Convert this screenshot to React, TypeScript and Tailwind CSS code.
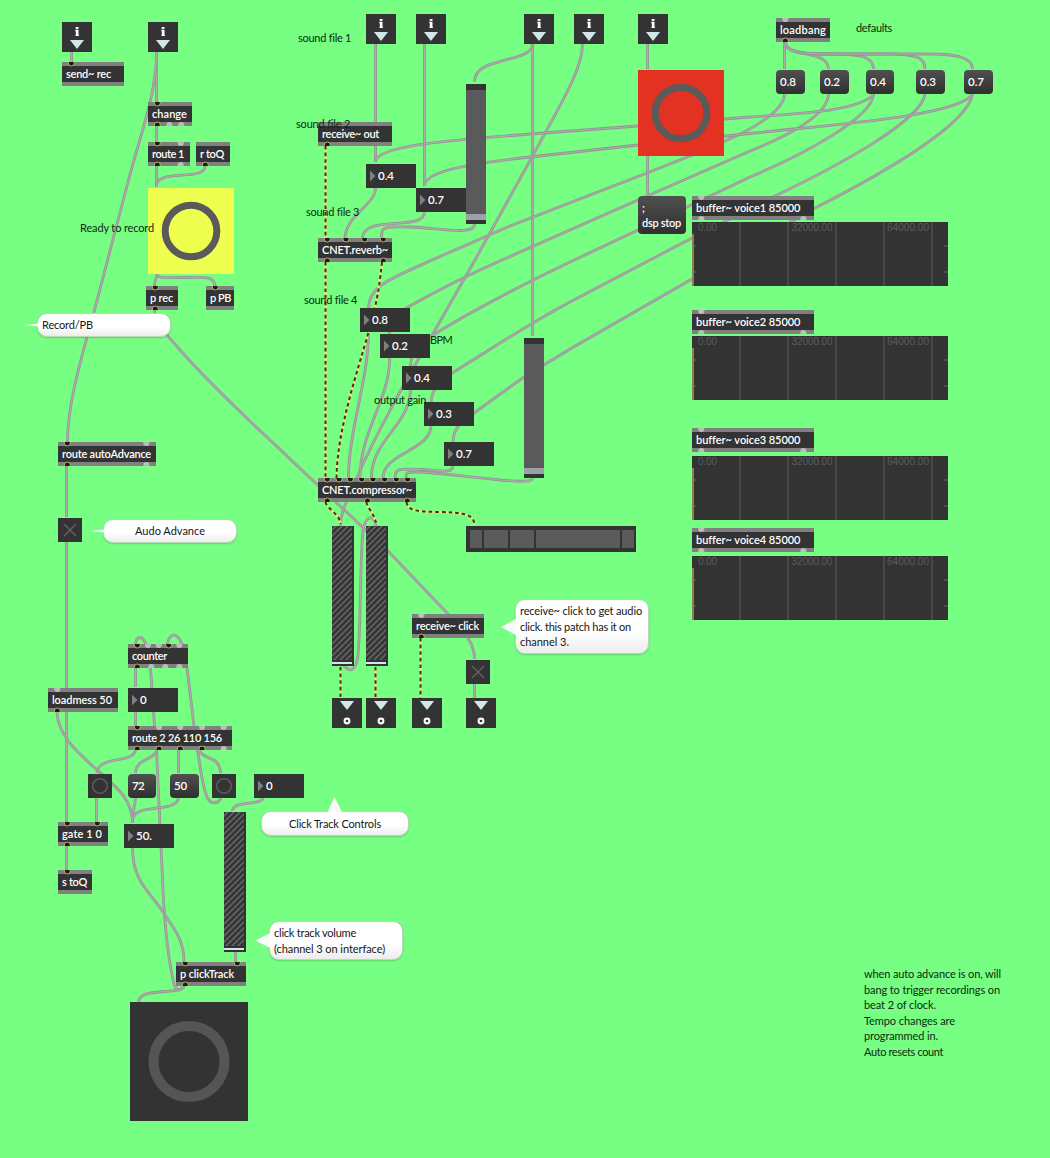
import { useLayoutEffect, useRef, useState } from "react";
import type { ReactNode } from "react";

/* Text whose tracking is tuned so that it spans the given width. */
function Fit({ w, children }: { w: number; children: string }) {
  const ref = useRef<HTMLSpanElement>(null);
  const [tracking, setTracking] = useState(0);
  useLayoutEffect(() => {
    if (ref.current) {
      const natural = ref.current.getBoundingClientRect().width;
      setTracking((w - natural) / children.length);
    }
  }, [w, children]);
  return (
    <span ref={ref} className="inline-block whitespace-pre" style={{ letterSpacing: tracking }}>
      {children}
    </span>
  );
}

/* A node on the free patching canvas. */
function At({ x, y, w, h, className = "", children }: { x: number; y: number; w?: number; h?: number; className?: string; children?: ReactNode }) {
  return (
    <div className={`absolute ${className}`} style={{ left: x, top: y, width: w, height: h }}>
      {children}
    </div>
  );
}

type Port = [number, boolean];

function Inlet({ p, flip, h }: { p: Port; flip?: boolean; h: number }) {
  const [cx, on] = p;
  const d = flip ? `M${cx - 3} ${h} V${h - 1} A3 3 0 0 1 ${cx + 3} ${h - 1} V${h}` : `M${cx - 3} 0 V1 A3 3 0 0 0 ${cx + 3} 1 V0`;
  return <path d={d} fill={on ? "#1d1d14" : "#bdbdbd"} stroke={on ? "#c3b878" : "none"} strokeWidth="0.9" />;
}

/* [x, y, width, label, label width, inlets, outlets] */
type Obj = [number, number, number, string, number, Port[], Port[]];
const a: Port = [9.3, true];
const b: Port = [9.3, false];

const objects: Obj[] = [
  [62, 62, 62, "send~ rec", 45, [a], []],
  [148, 102, 44, "change", 35, [a], [a, [21.3, false], [33.3, false]]],
  [148, 142, 42, "route 1", 32, [a, [32.7, false]], [a, [32.7, false]]],
  [196, 142, 34, "r toQ", 24, [], [a]],
  [146, 286, 32, "p rec", 23, [a], [a]],
  [206, 286, 28, "p PB", 21, [a], []],
  [318, 122, 74, "receive~ out", 57, [], [a]],
  [318, 238, 74, "CNET.reverb~", 66, [a, [28, true], [46.7, true], [65.3, true]], [a, [65.3, true]]],
  [318, 478, 98, "CNET.compressor~", 90, [a, [21, true], [32.3, true], [43.7, true], [55, true], [66.7, true], [78.3, true], [89.7, true]], [a, [49.5, true], [89.3, true]]],
  [776, 18, 54, "loadbang", 46, [b], [a]],
  [692, 196, 122, "buffer~ voice1 85000", 104, [b], [b, [111.3, false]]],
  [692, 310, 122, "buffer~ voice2 85000", 104, [b], [b, [111.3, false]]],
  [692, 428, 122, "buffer~ voice3 85000", 104, [b], [b, [111.3, false]]],
  [692, 528, 122, "buffer~ voice4 85000", 104, [b], [b, [111.3, false]]],
  [58, 442, 98, "route autoAdvance", 89, [a, [88.3, false]], [a, [88.3, false]]],
  [128, 644, 60, "counter", 35, [a, [20, false], [30.7, false], [40.7, true], [51.3, false]], [a, [23.3, false], [37.3, false], [51.3, false]]],
  [48, 688, 70, "loadmess 50", 60, [b], [a]],
  [128, 726, 104, "route 2 26 110 156", 90, [a, [31, false], [52.3, false], [74, false], [95.7, false]], [a, [31, true], [52.3, true], [74, true], [95.7, false]]],
  [58, 822, 50, "gate 1 0", 40, [a, [39.3, true]], [a]],
  [58, 870, 34, "s toQ", 25, [a], []],
  [176, 962, 70, "p clickTrack", 54, [a, [61.3, true]], [a]],
  [412, 614, 72, "receive~ click", 63, [b], [a]],
];

const numbers: [number, number, string, number][] = [
  [366, 164, "0.4", 16],
  [416, 188, "0.7", 16],
  [360, 308, "0.8", 16],
  [380, 334, "0.2", 16],
  [402, 366, "0.4", 16],
  [424, 402, "0.3", 16],
  [444, 442, "0.7", 16],
  [128, 688, "0", 7],
  [254, 774, "0", 7],
  [124, 824, "50.", 16],
];

const messages: [number, number, number, string, number][] = [
  [776, 70, 29, "0.8", 16],
  [820, 70, 29, "0.2", 16],
  [866, 70, 28, "0.4", 16],
  [916, 70, 29, "0.3", 16],
  [964, 70, 29, "0.7", 16],
  [128, 774, 28, "72", 12],
  [170, 774, 29, "50", 13],
];

const comments: [number, number, string, number][] = [
  [298, 30, "sound file 1", 53],
  [296, 116, "sound file 2", 54],
  [306, 204, "sound file 3", 53],
  [304, 292, "sound file 4", 53],
  [80, 220, "Ready to record", 74],
  [430, 332, "BPM", 22],
  [374, 392, "output gain", 52],
  [856, 20, "defaults", 36],
];

const notes: [string, number][] = [
  ["when auto advance is on, will", 137],
  ["bang to trigger recordings on", 136],
  ["beat 2 of clock.", 72],
  ["Tempo changes are", 91],
  ["programmed in.", 74],
  ["Auto resets count", 79],
];

const cords = [
  "M71.5 52V62",
  "M156.5 52V102",
  "M156.5 52C156.5 95 140 135 128 182L94 312C84 350 67.5 400 67.5 442",
  "M156.5 126V142",
  "M156.5 166V187",
  "M205 166C205 182 157 168 156.5 186",
  "M157 274C157 280 154.5 278 154.5 286",
  "M157 274C158 279 168 277.5 185 277.5S214 275 215 286",
  "M154.5 310C155 325 170 338 180 350C220 395 260 430 290 459L388 551L447 613C460 628 474.5 640 474.5 659",
  "M375.5 44V162",
  "M424.5 44V186",
  "M375.5 188C375.5 205 346 215 345 238",
  "M424.5 212C424.5 232 363 214 362.5 238",
  "M474.5 224C474.5 236 440 228 410 227S382 228 381.5 238",
  "M532.5 44V336",
  "M532.5 44C532.5 64 474.5 55 474.5 82",
  "M582.5 44C582.5 70 560 105 532 157L475 260L402 388C385 420 368 450 356 480C348 500 340.5 510 340.5 526",
  "M343 664C350 674 356 671 358 655C361 620 360 560 363 530C366 514 374 515 376 526",
  "M647.5 44V69",
  "M647.5 156V194",
  "M784.5 42V69",
  "M785 42C786 58 828 49 828.5 69",
  "M785 42C786 54 805 54 830 54S873.5 55 873.5 69",
  "M785 42C786 54 805 54 840 54H890C915 54 925 57 925 69",
  "M785 42C786 54 805 54 840 54H930C955 54 972.5 57 972.5 69",
  "M784.5 94C784 115 740 136 690 156L647 173L510 226L432 260C390 279 368.5 286 368.5 308",
  "M828.5 94C828 115 790 135 750 151L638 200L502 260C470 274 440 289 408 307C396 314 389.5 322 389.5 334",
  "M873.5 94C873 118 800 156 750 177L687 207L570 262C520 286 470 312 433 335C418 345 410.5 355 410.5 366",
  "M925 94C922 120 840 165 775 196L692 238L570 302C525 326 490 350 452 373C440 381 432 388 431 402",
  "M972.5 94C968 125 880 175 815 208L692 279L570 349L524 377L474 413C462 421 453 428 453 442",
  "M873.5 94C860 112 790 114 750 117L638 126L530 134C440 141 376 146 375.5 162",
  "M972.5 94C962 112 870 122 793 129L750 133.5L638 145L530 157C460 165 425 172 424.5 186",
  "M368.5 332C368.5 380 348.5 430 348.5 478",
  "M389.5 358C390 400 360 430 360 478",
  "M410.5 390C410 425 371 440 371.5 478",
  "M431 426C431 450 383 453 383 478",
  "M453 466C452 474 440 470.5 420 469.5S395 468 395 478",
  "M532.5 478C532.5 483 515 481 500 480C460 476 430 472 418 472S406 472 406 478",
  "M474.5 684V698",
  "M66.5 466V517",
  "M66.5 542V822",
  "M135.5 668V687",
  "M135.5 712V726",
  "M184 985C181 992 176 991 174 984C167 955 165 925 163.5 900C161 840 158 780 156.5 750L154.5 726L150.5 668L146 645C143 635 136 635 135.5 645",
  "M221 798C218 804 211 805 207 797C202 785 200 765 197.5 750L194 726L187 668L182 644C177 632 170 632 167 645",
  "M199 750C202 760 220 755 220.5 773",
  "M135.5 750C133 764 98 755 97 773",
  "M157 750C155 760 136 758 135.5 773",
  "M178.5 750V773",
  "M96.5 798V822",
  "M135.5 798C135 806 133 808 132.5 822",
  "M178.5 798C176 814 134 802 132.5 820",
  "M57 712C58 735 75 750 97 770C120 790 132 800 132.5 823",
  "M132.5 848C132.5 880 148 890 163 912C175 930 184 940 184 962",
  "M263 798C260 806 233 800 232.5 811",
  "M235.5 952V962",
  "M184 986C182 996 140 986 138.5 1002",
  "M66.5 846V870",
];

const signals = [
  "M325.5 146V238",
  "M325.5 262V478",
  "M382 262C378 300 374 312 368 334C358 370 337 430 336.5 478",
  "M325.5 502C326 508 340 514 340.5 524",
  "M366.5 502C367 508 375 514 376 524",
  "M406.5 502C408 512 420 511.5 440 512S474 513 474.5 525",
  "M340.5 667V698",
  "M375.5 667V698",
  "M420.5 638V698",
];

function PatchCords() {
  return (
    <svg className="absolute inset-0" width="1050" height="1158" fill="none">
      {cords.map((d, i) => (
        <g key={i}>
          <path d={d} stroke="#949494" strokeWidth="2.8" />
          <path d={d} stroke="#b2abad" strokeWidth="1.2" />
        </g>
      ))}
      {signals.map((d, i) => (
        <g key={i}>
          <path d={d} stroke="#dfe98a" strokeWidth="2.4" />
          <path d={d} stroke="#453410" strokeWidth="2" strokeDasharray="3.6 3" />
        </g>
      ))}
    </svg>
  );
}

function ObjectBox({ o }: { o: Obj }) {
  const [x, y, w, label, lw, ins, outs] = o;
  return (
    <At x={x} y={y} w={w} h={24} className="border-y-4 border-[#808080] bg-[#333333] pl-1 text-[11px] leading-4 font-semibold text-white">
      <Fit w={lw}>{label}</Fit>
      <svg className="absolute -top-1 left-0" width={w} height="24">
        {ins.map((p, i) => <Inlet key={i} p={p} h={24} />)}
        {outs.map((p, i) => <Inlet key={i} p={p} h={24} flip />)}
      </svg>
    </At>
  );
}

function NumberBox({ n }: { n: [number, number, string, number] }) {
  const [x, y, label, w] = n;
  return (
    <At x={x} y={y} w={50} h={24} className="flex items-center bg-[#333333] pl-1 text-[11.5px] leading-4 font-semibold text-white">
      <svg className="mr-[2px] shrink-0" width="6" height="12"><path d="M0 0.5V11.5L5.5 6Z" fill="#808080" /></svg>
      <Fit w={w}>{label}</Fit>
    </At>
  );
}

function InPort({ x, y }: { x: number; y: number }) {
  return (
    <At x={x} y={y} w={30} h={30} className="bg-[#333333]">
      <svg width="30" height="30">
        <rect x="13.7" y="5" width="2.8" height="1.9" fill="#fff" />
        <path d="M13.2 7.8H16.5V12.8H16.9V14H13.5V12.8H13.8V9H13.2Z" fill="#fff" />
        <path d="M8 18H22L15 27Z" fill="#d5e6ea" />
      </svg>
    </At>
  );
}

function OutPort({ x, y }: { x: number; y: number }) {
  return (
    <At x={x} y={y} w={30} h={30} className="bg-[#333333]">
      <svg width="30" height="30">
        <path d="M8 3H22L15 12Z" fill="#d5e6ea" />
        <circle cx="15" cy="23" r="2.4" fill="none" stroke="#fff" strokeWidth="2.1" />
      </svg>
    </At>
  );
}

function Bang({ x, y, w, h, r, stroke, bg, ring = "#5a5a5a" }: { x: number; y: number; w: number; h: number; r: number; stroke: number; bg: string; ring?: string }) {
  return (
    <At x={x} y={y} w={w} h={h} className={bg}>
      <svg width={w} height={h}>
        <circle cx={w / 2} cy={h / 2} r={r} fill="none" stroke={ring} strokeWidth={stroke} />
      </svg>
    </At>
  );
}

function Toggle({ x, y }: { x: number; y: number }) {
  return (
    <At x={x} y={y} w={24} h={24} className="bg-[#333333]">
      <svg width="24" height="24"><path d="M6 6L18 18M18 6L6 18" stroke="#5f5f5f" strokeWidth="1.7" /></svg>
    </At>
  );
}

function Slider({ x, y }: { x: number; y: number }) {
  return (
    <At x={x} y={y} w={20} h={140} className="flex flex-col bg-[#333333] pt-1.5 pb-1">
      <div className="flex-1 bg-[#5a5a5a]" />
      <div className="h-1.5 bg-[#9aa2a8]" />
    </At>
  );
}

function Gain({ x, y }: { x: number; y: number }) {
  return (
    <At x={x} y={y} w={22} h={140} className="flex flex-col bg-[#333333] pr-0.5 pb-0.5">
      <div className="flex-1 bg-[repeating-linear-gradient(135deg,#333333_0px,#333333_1.7px,#5a5a5a_1.7px,#5a5a5a_4.24px)]" />
      <div className="mt-0.5 h-0.5 bg-[#d5e4ee]" />
    </At>
  );
}

function Waveform({ y }: { y: number }) {
  return (
    <At x={692} y={y} w={256} h={64} className="bg-[#333333]">
      <svg className="absolute inset-0" width="256" height="64">
        <path d="M48 0V64M96 0V64M144 0V64M192 0V64M240 0V64" stroke="#484848" strokeWidth="2" />
        <path d="M0 24H4M0 50H4M252 24H256M252 50H256" stroke="#4d4d4d" strokeWidth="2" />
        <path d="M1 12V64" stroke="#8d7f4b" strokeWidth="2" />
      </svg>
      <div className="relative flex pl-1.5 font-['Liberation_Sans',sans-serif] text-[10px] leading-3 text-[#5c5c5c]">
        <span className="w-[93.5px]"><Fit w={19}>0.00</Fit></span>
        <span className="w-[95.5px]"><Fit w={41}>32000.00</Fit></span>
        <Fit w={42}>64000.00</Fit>
      </div>
    </At>
  );
}

/* Rounded speech bubble; the tail is given in page coordinates. */
function Bubble({ x, y, w, h, tail, center, lines }: { x: number; y: number; w: number; h: number; tail: string; center?: boolean; lines: [string, number][] }) {
  return (
    <>
      <At x={x} y={y} w={w} h={h} className={`flex flex-col justify-center rounded-[10px] border border-[#b9d9bb] bg-linear-to-b from-white from-60% to-[#ececec] text-[11px] leading-[15.5px] text-[#161616] shadow-[0_1px_2px_rgba(0,0,0,0.2)] ${center ? "items-center" : "items-start pl-1"}`}>
        {lines.map(([t, lw]) => <Fit key={t} w={lw}>{t}</Fit>)}
      </At>
      <svg className="absolute inset-0" width="1050" height="1158"><path d={tail} fill="#fafafa" /></svg>
    </>
  );
}

export default function App() {
  return (
    <main className="relative h-[1158px] w-[1050px] overflow-hidden bg-[#76ff82] font-['Lato',sans-serif]">
      <PatchCords />

      {objects.map((o, i) => <ObjectBox key={i} o={o} />)}
      {[222, 336, 456, 556].map((y) => <Waveform key={y} y={y} />)}

      <InPort x={62} y={22} />
      <InPort x={148} y={22} />
      {[366, 416, 524, 574, 638].map((x) => <InPort key={x} x={x} y={14} />)}
      {[332, 366, 412, 466].map((x) => <OutPort key={x} x={x} y={698} />)}

      <Slider x={466} y={84} />
      <Slider x={524} y={338} />
      <Gain x={332} y={526} />
      <Gain x={366} y={526} />
      <Gain x={224} y={812} />

      {numbers.map((n, i) => <NumberBox key={i} n={n} />)}
      {messages.map(([x, y, w, label, lw], i) => (
        <At key={i} x={x} y={y} w={w} h={24} className="flex items-center rounded-[4px] bg-linear-to-b from-[#505050] to-[#303030] pl-1 text-[11.5px] leading-4 font-semibold text-white">
          <Fit w={lw}>{label}</Fit>
        </At>
      ))}
      <At x={638} y={196} w={48} h={38} className="flex flex-col items-start justify-center rounded-[4px] bg-linear-to-b from-[#505050] to-[#303030] pl-1 text-[11px] leading-[15px] font-semibold text-white">
        <span>;</span>
        <Fit w={39}>dsp stop</Fit>
      </At>

      <Bang x={148} y={188} w={86} h={86} r={25.8} stroke={7} bg="bg-[#efff4f]" />
      <Bang x={638} y={70} w={86} h={86} r={25.8} stroke={7} bg="bg-[#e33122]" />
      <Bang x={130} y={1002} w={118} h={119} r={35.5} stroke={10} bg="bg-[#333333]" ring="#555555" />
      <Bang x={88} y={774} w={24} h={24} r={7.3} stroke={1.6} bg="bg-[#333333]" />
      <Bang x={212} y={774} w={24} h={24} r={7.3} stroke={1.6} bg="bg-[#333333]" />
      <Toggle x={58} y={518} />
      <Toggle x={466} y={660} />

      <At x={466} y={526} w={170} h={26} className="flex gap-0.5 bg-[#333333] py-1 pr-0.5 pl-1">
        <div className="w-3 bg-[#5a5a5a]" />
        <div className="w-6 bg-[#5a5a5a]" />
        <div className="w-6 bg-[#5a5a5a]" />
        <div className="w-[84px] bg-[#5a5a5a]" />
        <div className="w-3 bg-[#5a5a5a]" />
      </At>

      <Bubble x={37} y={313} w={134} h={24} tail="M24 325L38 323.5V326.5Z" lines={[["Record/PB", 51]]} />
      <Bubble x={103} y={519} w={134} h={24} center tail="M90 531L104 529.5V532.5Z" lines={[["Audo Advance", 70]]} />
      <Bubble x={261} y={811} w={148} h={25} center tail="M334.5 797L327.5 812H342Z" lines={[["Click Track Controls", 92]]} />
      <Bubble x={269} y={921} w={134} h={39} tail="M255.5 940.5L270 933V948Z" lines={[["click track volume", 82], ["(channel 3 on interface)", 111]]} />
      <Bubble x={515} y={599} w={134} h={55} tail="M501 627L516 619V635Z" lines={[["receive~ click to get audio", 122], ["click. this patch has it on", 111], ["channel 3.", 49]]} />

      {comments.map(([x, y, t, w], i) => (
        <At key={i} x={x} y={y} className="text-[11px] leading-4 text-[#0d2a10]">
          <Fit w={w}>{t}</Fit>
        </At>
      ))}
      <At x={864} y={966} className="flex flex-col items-start text-[11px] leading-[15.5px] text-[#0d2a10]">
        {notes.map(([t, w]) => <Fit key={t} w={w}>{t}</Fit>)}
      </At>
    </main>
  );
}
